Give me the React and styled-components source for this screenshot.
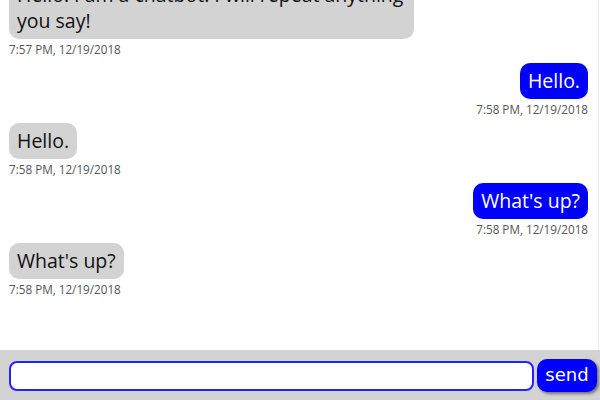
import { useState } from 'react';
import styled, { createGlobalStyle } from 'styled-components';

const GlobalStyle = createGlobalStyle`
  html, body {
    margin: 0;
    padding: 0;
    background: #ffffff;
    font-family: 'Open Sans', sans-serif;
  }
`;

const ChatWrap = styled.div`
  width: 600px;
  height: 400px;
  display: flex;
  flex-direction: column;
  overflow: hidden;
`;

const MessageList = styled.div`
  flex: 1;
  min-height: 0;
  display: flex;
  flex-direction: column;
  justify-content: flex-end;
  overflow: hidden;
  padding: 0 10px 47px 9px;
  border-right: 1px solid #ececec;
  margin-right: 1px;
`;

const MessageRow = styled.div`
  display: flex;
  flex-direction: column;
  align-items: ${(p) => (p.$mine ? 'flex-end' : 'flex-start')};
  margin-bottom: 6px;
  flex-shrink: 0;
`;

const Bubble = styled.div`
  box-sizing: border-box;
  max-width: 405px;
  padding: 5px 8px;
  border-radius: 10px;
  font-size: 19.5px;
  line-height: 26px;
  background: ${(p) => (p.$mine ? '#0000ff' : '#d3d3d3')};
  color: ${(p) => (p.$mine ? '#ffffff' : '#111111')};
`;

const Stamp = styled.span`
  margin-top: 2px;
  font-size: 11.7px;
  line-height: 16px;
  color: #555555;
`;

const InputBar = styled.form`
  height: 50px;
  flex-shrink: 0;
  background: #d3d3d3;
  display: flex;
  align-items: center;
  gap: 3px;
  padding: 0 3px 0 9px;
  box-sizing: border-box;
`;

const TextInput = styled.input`
  flex: 1;
  height: 30px;
  box-sizing: border-box;
  border: 2px solid #2222ff;
  border-radius: 8px;
  padding: 0 8px;
  font-size: 16px;
  font-family: 'Open Sans', sans-serif;
  outline: none;
  background: #ffffff;
  margin-top: 1px;
`;

const SendButton = styled.button`
  width: 60px;
  height: 33px;
  border: none;
  border-radius: 10px;
  background: #0000ff;
  color: #ffffff;
  font-family: 'DejaVu Sans', sans-serif;
  font-size: 18px;
  padding: 0 0 2px;
  box-shadow: 2px 2px 3px rgba(0, 0, 0, 0.45);
  cursor: pointer;
`;

const initial = [
  { mine: false, text: 'Hello! I am a chatbot. I will repeat anything you say!', time: '7:57 PM, 12/19/2018' },
  { mine: true, text: 'Hello.', time: '7:58 PM, 12/19/2018' },
  { mine: false, text: 'Hello.', time: '7:58 PM, 12/19/2018' },
  { mine: true, text: "What's up?", time: '7:58 PM, 12/19/2018' },
  { mine: false, text: "What's up?", time: '7:58 PM, 12/19/2018' },
];

export default function App() {
  const [messages] = useState(initial);
  const [input, setInput] = useState('');

  return (
    <ChatWrap>
      <GlobalStyle />
      <MessageList>
        {messages.map((m, i) => (
          <MessageRow key={i} $mine={m.mine}>
            <Bubble $mine={m.mine}>{m.text}</Bubble>
            <Stamp>{m.time}</Stamp>
          </MessageRow>
        ))}
      </MessageList>
      <InputBar onSubmit={(e) => e.preventDefault()}>
        <TextInput autoFocus value={input} onChange={(e) => setInput(e.target.value)} />
        <SendButton type="submit">send</SendButton>
      </InputBar>
    </ChatWrap>
  );
}
